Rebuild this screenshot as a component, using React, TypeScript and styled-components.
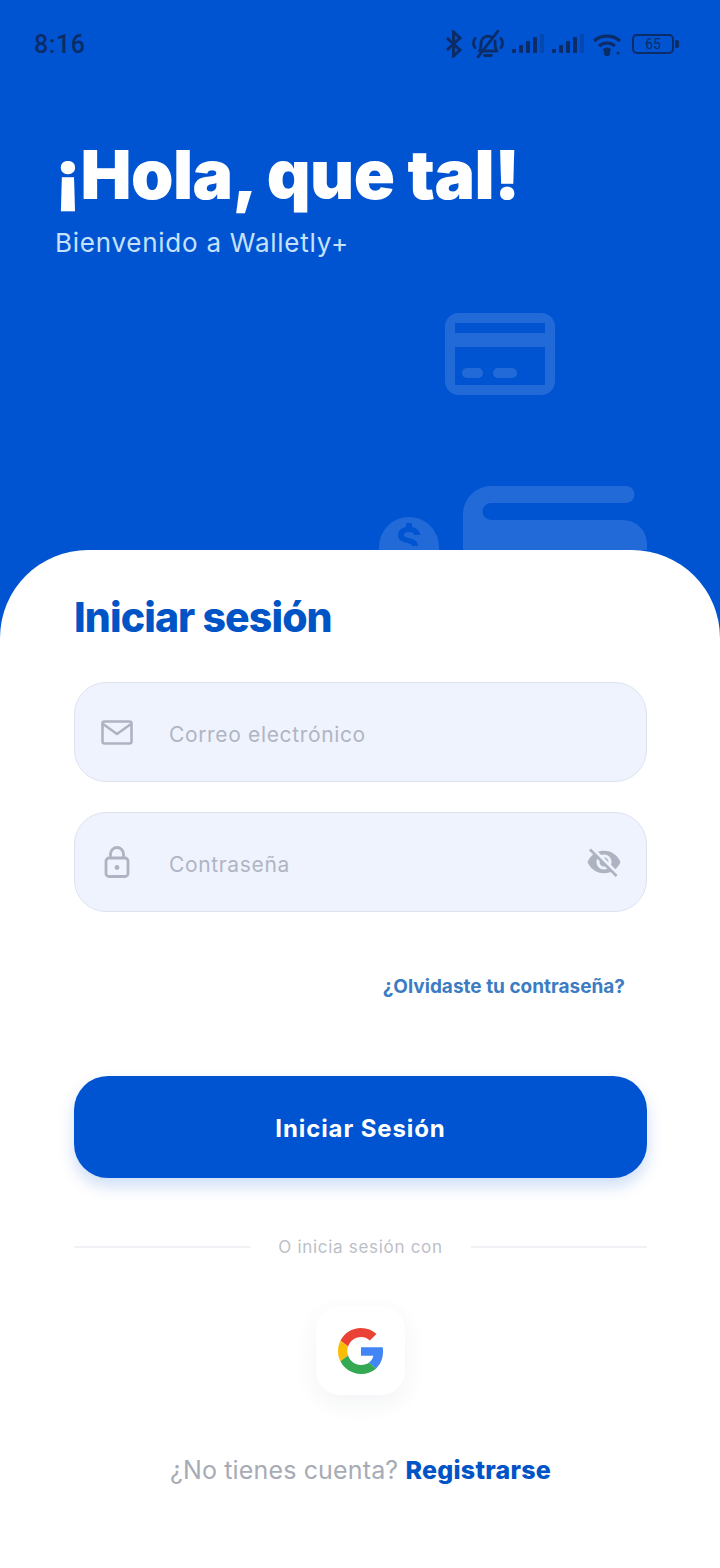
import React from "react";
import styled, { createGlobalStyle } from "styled-components";
import { MdVisibilityOff } from "react-icons/md";

const GlobalStyle = createGlobalStyle`
  html, body {
    margin: 0;
    padding: 0;
    background: #0054d2;
  }
  * {
    box-sizing: border-box;
  }
`;

const Page = styled.div`
  width: 720px;
  height: 1568px;
  display: flex;
  flex-direction: column;
  background: #0054d2;
  font-family: "Inter", "Noto Sans", sans-serif;
  overflow: hidden;
`;

const Hero = styled.header`
  position: relative;
  height: 550px;
  flex: none;
  overflow: hidden;
`;

const StatusBar = styled.div`
  height: 88px;
  padding: 0 42px 0 34px;
  display: flex;
  align-items: center;
  justify-content: space-between;
  color: #0b2c66;
`;

const Time = styled.span`
  font-family: "Roboto", sans-serif;
  font-size: 25px;
  font-weight: 500;
  letter-spacing: 0.6px;
`;

const StatusIcons = styled.div`
  display: flex;
  align-items: center;
  gap: 8px;
`;

const Battery = styled.div`
  position: relative;
  width: 42px;
  height: 20px;
  border: 2px solid #0b2c66;
  border-radius: 5px;
  margin-left: 2px;
  margin-right: 4px;
  display: flex;
  align-items: center;
  justify-content: center;
  font-family: "Roboto", sans-serif;
  font-size: 14px;
  line-height: 1;
  &::after {
    content: "";
    position: absolute;
    right: -7px;
    top: 4px;
    width: 4px;
    height: 8px;
    border-radius: 0 2px 2px 0;
    background: #0b2c66;
  }
`;

const Greeting = styled.div`
  padding: 47px 55px 0;
`;

const Title = styled.h1`
  margin: 0;
  color: #fff;
  font-size: 68px;
  line-height: 78px;
  font-weight: 900;
  letter-spacing: -0.5px;
  white-space: nowrap;
`;

const Subtitle = styled.p`
  margin: 13px 0 0;
  color: #c6e2fb;
  font-size: 26px;
  line-height: 34px;
  font-weight: 400;
  letter-spacing: 0.75px;
`;

const Deco = styled.svg`
  position: absolute;
  fill: #fff;
  opacity: 0.13;
`;

const Sheet = styled.main`
  flex: 1;
  background: #fff;
  border-radius: 88px 88px 0 0;
  padding: 40px 73px 0 74px;
  display: flex;
  flex-direction: column;
`;

const SheetTitle = styled.h2`
  margin: 0;
  color: #0054c6;
  font-size: 41px;
  line-height: 54px;
  font-weight: 800;
  letter-spacing: -0.9px;
`;

const Fields = styled.div`
  margin-top: 38px;
  display: flex;
  flex-direction: column;
  gap: 30px;
`;

const Field = styled.div`
  height: 100px;
  background: #eff3fe;
  border: 1.5px solid #dde2f0;
  border-radius: 32px;
  display: flex;
  align-items: center;
  padding: 0 24px 0 25px;
  color: #aeb3c2;
`;

const FieldIcon = styled.span`
  width: 34px;
  margin-right: 35px;
  display: flex;
  justify-content: center;
  flex: none;
`;

const Placeholder = styled.span`
  flex: 1;
  padding-top: 4px;
  font-size: 21px;
  letter-spacing: 0.65px;
  color: #b0b5c3;
`;

const Forgot = styled.a`
  align-self: flex-end;
  margin: 61px 22px 0 0;
  color: #3c7cc2;
  font-size: 19px;
  line-height: 28px;
  font-weight: 700;
`;

const PrimaryButton = styled.button`
  margin-top: 75px;
  height: 102px;
  border: none;
  border-radius: 34px;
  background: #0054d2;
  color: #fff;
  font-family: inherit;
  font-size: 24px;
  font-weight: 700;
  letter-spacing: 0.9px;
  padding: 2px 0 0;
  box-shadow: 0 8px 16px rgba(0, 84, 210, 0.2);
`;

const Divider = styled.div`
  margin-top: 58px;
  display: flex;
  align-items: center;
  justify-content: space-between;
  color: #bcbfc7;
  font-size: 17px;
  line-height: 22px;
  letter-spacing: 0.7px;
  &::before,
  &::after {
    content: "";
    width: 176px;
    height: 2px;
    background: #f0f1f5;
  }
`;

const GoogleButton = styled.button`
  align-self: center;
  margin-top: 48px;
  width: 89px;
  height: 89px;
  border: none;
  border-radius: 24px;
  background: #fff;
  box-shadow: 0 8px 24px rgba(30, 50, 90, 0.06);
  display: flex;
  align-items: center;
  justify-content: center;
  padding: 0;
`;

const Footer = styled.p`
  margin: 58px 0 0;
  text-align: center;
  color: #a7abb5;
  font-size: 25px;
  line-height: 34px;
  letter-spacing: 0.15px;
  b {
    color: #0054c6;
    font-weight: 800;
    letter-spacing: 0.25px;
  }
`;

const Signal = () => (
  <svg width="32" height="22" viewBox="0 0 32 22" fill="#0b2c66">
    <rect x="0" y="16" width="4" height="4" rx="1" />
    <rect x="7" y="12" width="4" height="8" rx="1" />
    <rect x="14" y="8" width="4" height="12" rx="1" />
    <rect x="21" y="4" width="4" height="16" rx="1" />
    <rect x="28" y="1" width="4" height="19" rx="1" opacity="0.3" />
  </svg>
);

const StatusGlyphs = () => (
  <StatusIcons>
    <svg width="20" height="28" viewBox="0 0 20 28" fill="none" stroke="#0b2c66" strokeWidth="3">
      <path d="M3 8l13 12-6.5 6V2L16 8 3 20" />
    </svg>
    <svg width="32" height="28" viewBox="0 0 32 28" fill="none" stroke="#0b2c66" strokeWidth="2.800" strokeLinecap="round" strokeLinejoin="round">
      <path d="M7.500 21c1.500-2 1.500-4.500 1.500-8a7 7 0 0 1 11-5.500M23 11v2c0 3.500 0 6 2 8H7.500" />
      <path d="M12.500 25.500h7M6 27L26 1" />
      <path d="M3 8.500c-1.800 2.800-1.800 6.500 0 9.300M29 8.500c1.800 2.800 1.800 6.500 0 9.300" />
    </svg>
    <Signal />
    <Signal />
    <svg width="30" height="24" viewBox="0 0 30 24" fill="none" stroke="#0b2c66" strokeWidth="3.200">
      <path d="M2 9c7-6.500 19-6.500 26 0M7 14c4.500-4 11.500-4 16 0M11.500 18.500c2-1.500 5-1.500 7 0" />
      <circle cx="15" cy="21" r="1.600" fill="#0b2c66" />
      <circle cx="26" cy="21" r="1.500" fill="#0b2c66" stroke="none" />
    </svg>
    <Battery>65</Battery>
  </StatusIcons>
);

const CardDeco = () => (
  <Deco width="110" height="82" viewBox="0 0 110 82" style={{ left: 445, top: 313 }}>
    <path
      fillRule="evenodd"
      d="M14 0h82a14 14 0 0 1 14 14v54a14 14 0 0 1-14 14H14A14 14 0 0 1 0 68V14A14 14 0 0 1 14 0zm-4 10v10h90V10zm0 24v38h90V34z"
    />
    <rect x="17" y="55" width="21" height="10" rx="5" />
    <rect x="48" y="55" width="24" height="10" rx="5" />
  </Deco>
);

const WalletDeco = () => (
  <Deco width="190" height="70" viewBox="0 0 190 70" style={{ left: 463, top: 486 }}>
    <path d="M28 0h135a8.500 8.500 0 0 1 0 17H28a8.500 8.500 0 0 0 0 17h132a24 24 0 0 1 24 24v12H0V28A28 28 0 0 1 28 0z" />
  </Deco>
);

const CoinDeco = () => (
  <Deco width="62" height="40" viewBox="0 0 62 40" style={{ left: 378, top: 517 }}>
    <path
      fillRule="evenodd"
      d="M31 0a30 30 0 0 1 30 30v10H1V30A30 30 0 0 1 31 0zm-3 6v4c-5 1-8 4-8 8 0 5 4 7 9 8 3 1 5 1 5 3h6c0-5-4-7-9-8-3-1-5-1-5-3s2-3 5-3 5 1 5 3h6c0-4-3-7-8-8V6z"
    />
  </Deco>
);

const MailIcon = () => (
  <svg width="32" height="25" viewBox="0 0 32 25" fill="none" stroke="#aeb3c2" strokeWidth="2.600" strokeLinejoin="round">
    <rect x="1.500" y="1.500" width="29" height="22" rx="2" />
    <path d="M2 4l14 10L30 4" />
  </svg>
);

const LockIcon = () => (
  <svg width="26" height="32" viewBox="0 0 26 32" fill="none" stroke="#aeb3c2" strokeWidth="2.800">
    <rect x="2" y="12" width="22" height="18.500" rx="3" />
    <path d="M6.500 12V8a6.500 6.500 0 0 1 13 0v4" />
    <circle cx="13" cy="21.500" r="2.400" fill="#aeb3c2" stroke="none" />
  </svg>
);

const GoogleIcon = () => (
  <svg width="46" height="46" viewBox="0 0 48 48">
    <path fill="#EA4335" d="M24 9.500c3.500 0 6.700 1.200 9.200 3.600l6.900-6.900C35.900 2.400 30.500 0 24 0 14.600 0 6.500 5.400 2.600 13.200l8 6.200C12.400 13.700 17.700 9.500 24 9.500z" />
    <path fill="#4285F4" d="M47 24.500c0-1.600-.1-3.100-.4-4.500H24v9h12.900c-.6 3-2.300 5.500-4.800 7.200l7.700 6c4.500-4.200 7.200-10.400 7.200-17.700z" />
    <path fill="#FBBC05" d="M10.500 28.600A14.500 14.500 0 0 1 9.700 24c0-1.600.3-3.100.8-4.600l-8-6.200A24 24 0 0 0 0 24c0 3.900.9 7.500 2.600 10.800l7.900-6.200z" />
    <path fill="#34A853" d="M24 48c6.500 0 11.900-2.100 15.900-5.800l-7.700-6c-2.200 1.400-4.900 2.300-8.200 2.300-6.300 0-11.600-4.200-13.500-9.900l-8 6.200C6.500 42.600 14.600 48 24 48z" />
  </svg>
);

const App = () => {
  return (
    <Page>
      <GlobalStyle />
      <Hero>
        <StatusBar>
          <Time>8:16</Time>
          <StatusGlyphs />
        </StatusBar>
        <Greeting>
          <Title>¡Hola, que tal!</Title>
          <Subtitle>Bienvenido a Walletly+</Subtitle>
        </Greeting>
        <CardDeco />
        <CoinDeco />
        <WalletDeco />
      </Hero>
      <Sheet>
        <SheetTitle>Iniciar sesión</SheetTitle>
        <Fields>
          <Field>
            <FieldIcon>
              <MailIcon />
            </FieldIcon>
            <Placeholder>Correo electrónico</Placeholder>
          </Field>
          <Field>
            <FieldIcon>
              <LockIcon />
            </FieldIcon>
            <Placeholder>Contraseña</Placeholder>
            <MdVisibilityOff size={36} color="#aeb3c2" />
          </Field>
        </Fields>
        <Forgot>¿Olvidaste tu contraseña?</Forgot>
        <PrimaryButton>Iniciar Sesión</PrimaryButton>
        <Divider>O inicia sesión con</Divider>
        <GoogleButton>
          <GoogleIcon />
        </GoogleButton>
        <Footer>
          ¿No tienes cuenta? <b>Registrarse</b>
        </Footer>
      </Sheet>
    </Page>
  );
};

export default App;
